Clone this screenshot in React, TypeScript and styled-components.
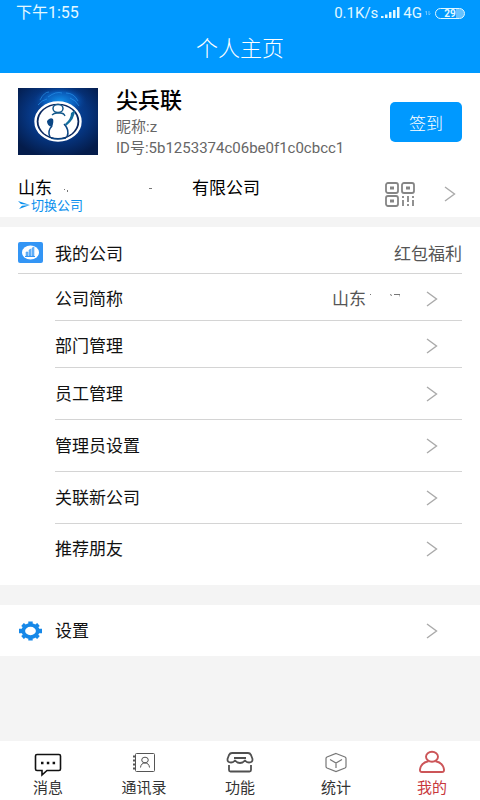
import React from "react";
import styled, { createGlobalStyle } from "styled-components";

const GlobalStyle = createGlobalStyle`
  * { box-sizing: border-box; }
  body {
    margin: 0;
    background: #f4f4f4;
    color: #111;
    font-family: Roboto, "Noto Sans CJK SC", sans-serif;
    font-size: 17px;
    font-weight: 400;
  }
  button { font: inherit; color: inherit; border: 0; padding: 0; background: none; cursor: pointer; }
  a { color: inherit; text-decoration: none; }
  svg { display: block; flex: none; }
`;

const Page = styled.div`
  min-height: 100vh;
  display: flex;
  flex-direction: column;
`;

const Header = styled.header`
  background: #0099ff;
  color: #fff;
  height: 73px;
`;

const StatusBar = styled.div`
  display: flex;
  justify-content: space-between;
  align-items: center;
  height: 26px;
  padding: 0 15px 0 16px;
  font-size: 15px;
  line-height: 26px;
  color: #e2f8ff;
`;

const Clock = styled.span`
  font-size: 16px;
`;

const StatusGroup = styled.div`
  display: flex;
  align-items: center;
  gap: 3px;
`;

const Title = styled.h1`
  margin: 0;
  text-align: center;
  font-size: 22px;
  line-height: 46px;
  font-weight: 300;
`;

const Profile = styled.section`
  background: #fff;
  height: 144px;
  padding: 15px 18px 0;
`;

const Person = styled.div`
  display: flex;
  height: 67px;
  gap: 18px;
`;

const PersonText = styled.div`
  flex: 1;
  min-width: 0;
`;

const Name = styled.h2`
  margin: 0 0 3px;
  font-size: 22px;
  line-height: 26px;
  font-weight: 500;
  color: #000;
`;

const Detail = styled.p`
  margin: 0;
  font-size: 15px;
  line-height: 21px;
  color: #666;
  white-space: nowrap;
`;

const SignButton = styled.button`
  && {
    margin-top: 14px;
    width: 72px;
    height: 40px;
    border-radius: 5px;
    background: #0099ff;
    color: #fff;
    font-size: 17px;
    font-weight: 300;
  }
`;

const Company = styled.div`
  display: flex;
  align-items: center;
  height: 62px;
  padding-top: 16px;
`;

const CompanyText = styled.div`
  flex: 1;
`;

const CompanyName = styled.div`
  display: flex;
  align-items: center;
  line-height: 22px;
  color: #000;
`;

const Erased = styled.span<{ $width: number }>`
  width: ${(p) => p.$width}px;
  height: 22px;
`;

const SwitchButton = styled.button`
  && {
    display: flex;
    align-items: center;
    gap: 1px;
    color: #0a90ee;
    font-size: 13px;
    line-height: 13px;
  }
`;

const CompanyActions = styled.div`
  display: flex;
  align-items: center;
  gap: 29px;
  padding-right: 6px;
`;

const Section = styled.section<{ $gap: number; $end?: number }>`
  background: #fff;
  margin-top: ${(p) => p.$gap}px;
  padding: 0 18px ${(p) => p.$end ?? 0}px;
`;

const SectionHead = styled.div`
  display: flex;
  align-items: center;
  height: 47px;
  padding-top: 4px;
  border-bottom: 1px solid #d4d4d4;
`;

const HeadIcon = styled.span`
  width: 37px;
`;

const HeadTitle = styled.h2`
  margin: 0;
  flex: 1;
  font-size: 17px;
  font-weight: 400;
`;

const Welfare = styled.a`
  color: #555;
`;

const Row = styled.button<{ $height: number; $top?: number; $last?: boolean; $indent?: boolean }>`
  && {
    display: flex;
    align-items: center;
    width: ${(p) => (p.$indent ? "calc(100% - 37px)" : "100%")};
    height: ${(p) => p.$height}px;
    margin-left: ${(p) => (p.$indent ? 37 : 0)}px;
    padding-top: ${(p) => p.$top ?? 0}px;
    padding-right: 24px;
    border-bottom: ${(p) => (p.$last ? "0" : "1px solid #d4d4d4")};
    text-align: left;
    line-height: 24px;
  }
`;

const RowLabel = styled.span`
  flex: 1;
`;

const RowValue = styled.span`
  display: flex;
  align-items: center;
  margin-right: 26px;
  color: #555;
`;

const TabBar = styled.nav`
  display: grid;
  grid-template-columns: repeat(5, 1fr);
  height: 59px;
  margin-top: auto;
  background: #fff;
`;

const Tab = styled.a<{ $active?: boolean }>`
  display: flex;
  flex-direction: column;
  align-items: center;
  padding-top: 8px;
  font-size: 15px;
  line-height: 22px;
  color: ${(p) => (p.$active ? "#c8373c" : "#333")};
`;

const Chevron = () => (
  <svg width="12" height="16" viewBox="0 0 12 16" fill="none" stroke="#aaa" strokeWidth="1.4" aria-hidden="true">
    <path d="M1 1l9.500 7L1 15" />
  </svg>
);

const Signal = () => (
  <svg width="19" height="12" viewBox="0 0 19 12" fill="#e2f8ff" aria-hidden="true">
    <rect x="0" y="9" width="2.500" height="2" />
    <rect x="4" y="7.500" width="2.500" height="3.500" />
    <rect x="8" y="5" width="2.500" height="6" />
    <rect x="12" y="3" width="2.500" height="8" />
    <rect x="16" y="0" width="2.500" height="11" />
  </svg>
);

const DataArrows = () => (
  <svg width="6" height="6" viewBox="0 0 6 6" fill="none" stroke="#6cc4ff" aria-hidden="true">
    <path d="M1.500 5V1L0 2.500M4 1v4l1.500-1.500" />
  </svg>
);

const BatteryBox = styled.span`
  display: block;
  width: 30px;
  height: 11px;
  margin-left: 1px;
  border: 1px solid #e2f8ff;
  border-radius: 6px;
  background: linear-gradient(90deg, #0099ff 70%, #66c2ff 70%);
  font-size: 10px;
  line-height: 10px;
  font-weight: 700;
  text-align: center;
`;

const Avatar = () => (
  <svg width="80" height="67" viewBox="0 0 80 67" role="img" aria-label="尖兵联">
    <defs>
      <radialGradient id="night" cx="50%" cy="40%" r="65%">
        <stop offset="0" stopColor="#0a55b5" />
        <stop offset="0.550" stopColor="#063784" />
        <stop offset="1" stopColor="#041c4b" />
      </radialGradient>
      <radialGradient id="glow" cx="50%" cy="50%" r="50%">
        <stop offset="0" stopColor="#1290ea" />
        <stop offset="0.600" stopColor="#0a62c4" stopOpacity="0.800" />
        <stop offset="1" stopColor="#063784" stopOpacity="0" />
      </radialGradient>
    </defs>
    <rect width="80" height="67" fill="url(#night)" />
    <ellipse cx="42" cy="13" rx="27" ry="15" fill="url(#glow)" />
    <path d="M22 12q4-8 9-8M30 9q8-6 14-4M48 5q8 0 12 8M52 10q6 2 9 8M20 17q4-5 9-6" stroke="#2b9af0" fill="none" opacity="0.600" />
    <ellipse cx="40" cy="33.500" rx="22.500" ry="19" fill="#08265e" stroke="#fff" strokeWidth="2.400" />
    <ellipse cx="40" cy="33.500" rx="19.500" ry="16.500" fill="#fff" />
    <ellipse cx="40" cy="20.500" rx="5" ry="4" fill="#fff" stroke="#14598b" strokeWidth="1.500" />
    <path d="M34 27q2-2 5-2h3q4 0 5 3" stroke="#14598b" strokeWidth="1.300" fill="none" />
    <path d="M29 33q3-4 6-2 1 3-1 8-5-1-5-6z" fill="#0b4684" />
    <path d="M57 22q0 9-9 16l-1-2q6-5 6-11z" fill="#126e9e" />
    <path d="M34 38q-5 5-2 11M46 36q6 6 3 13M33 50q6 2 15 0" stroke="#0b4684" strokeWidth="1.500" fill="none" />
  </svg>
);

const PlaneIcon = () => (
  <svg width="12" height="8" viewBox="0 0 12 8" fill="#0a90ee" aria-hidden="true">
    <path d="M0 0l12 4L1 8l3-3.300L12 4 3 3z" />
  </svg>
);

const QrIcon = () => (
  <svg width="30" height="25" viewBox="0 0 30 25" fill="none" stroke="#858585" strokeWidth="1.800" aria-hidden="true">
    <rect x="1" y="1" width="12" height="10" rx="2" />
    <rect x="17" y="1" width="12" height="10" rx="2" />
    <rect x="1" y="14" width="12" height="10" rx="2" />
    <path d="M5 6h4M21 6h4M5 19h4" strokeWidth="3" />
    <path d="M18 14v2M18 18v6M23 14v6M23 22v2M28 14v2M28 18v6" />
  </svg>
);

const CompanyIcon = () => (
  <svg width="25" height="21" viewBox="0 0 25 21" aria-hidden="true">
    <rect width="25" height="21" rx="2" fill="#3395f5" />
    <ellipse cx="12.500" cy="10.500" rx="8.500" ry="7" fill="#fff" />
    <path d="M8 14v-4h2v4zM11 14V8l2-1v7zM14 14V6l2-1v9z" fill="#72b7f8" stroke="#3395f5" strokeWidth="0.500" />
    <path d="M7 14.500h10" stroke="#3395f5" />
  </svg>
);

const GearIcon = () => (
  <svg width="24" height="20" viewBox="0 0 24 20" aria-hidden="true">
    <g fill="none" stroke="#1688e8">
      <ellipse cx="12.500" cy="10" rx="7.200" ry="6" strokeWidth="3.600" />
      <path d="M12.500 0.500v3M12.500 16.500v3M1 10h3M21 10h3" strokeWidth="4.400" />
      <path d="M4.500 3.400l2 1.700M18.500 14.900l2 1.700M20.500 3.400l-2 1.700M6.500 14.900l-2 1.700" strokeWidth="4" />
    </g>
  </svg>
);

const MessageIcon = () => (
  <svg width="28" height="28" viewBox="0 0 28 28" fill="none" stroke="#111" strokeWidth="1.600" aria-hidden="true">
    <path d="M3 5.500h22q1.500 0 1.500 1.500v13q0 1.500-1.500 1.500H13l-5 4.500v-4.500H3q-1.500 0-1.500-1.500V7Q1.500 5.500 3 5.500z" />
    <path d="M7 14h2.500M12.800 14h2.500M18.600 14h2.500" strokeWidth="2.500" />
  </svg>
);

const ContactsIcon = () => (
  <svg width="24" height="28" viewBox="0 0 24 28" fill="none" stroke="#555" aria-hidden="true">
    <rect x="3.500" y="4.500" width="19" height="18" rx="1" />
    <path d="M1 7.500h3M1 11.500h3M1 15.500h3M1 19.500h3" strokeWidth="1.800" />
    <ellipse cx="13" cy="11" rx="3.300" ry="2.800" />
    <path d="M8.500 18.500q.5-4.500 4.500-4.500t4.500 4.500" />
  </svg>
);

const ShopIcon = () => (
  <svg width="28" height="28" viewBox="0 0 28 28" fill="none" stroke="#505050" strokeWidth="1.800" strokeLinejoin="round" aria-hidden="true">
    <path d="M6 4h16q2 0 3 2l1.500 4q.3 3.500-3.500 3.500-2.500 0-4-2-2 2.500-5 2.500t-5-2.500q-1.500 2-4 2-3.800 0-3.500-3.500L3 6q1-2 3-2z" />
    <path d="M8 9h12M3 16v5q0 1.500 1.500 1.500h19q1.500 0 1.500-1.500v-5" />
  </svg>
);

const CubeIcon = () => (
  <svg width="24" height="28" viewBox="0 0 24 28" fill="none" stroke="#777" strokeWidth="1.200" aria-hidden="true">
    <path d="M12 4.500l9 3.500q1 .5 1 1.500v8q0 1-1 1.500l-9 3.500L3 19q-1-.5-1-1.500v-8Q2 8.500 3 8z" />
    <path d="M6 10.500l6 3.500 6-3.500M12 14v5" />
  </svg>
);

const MeIcon = () => (
  <svg width="28" height="28" viewBox="0 0 28 28" fill="none" stroke="#cc5558" strokeWidth="1.900" aria-hidden="true">
    <ellipse cx="14" cy="7.800" rx="6" ry="5" />
    <path d="M10.500 12.300q-7.500 1.500-8.500 8-.3 2.700 2 2.700h20q2.300 0 2-2.700-1-6.500-8.500-8" />
  </svg>
);

const rows = [
  { label: "公司简称", height: 47, top: 3, company: true },
  { label: "部门管理", height: 47, top: 3 },
  { label: "员工管理", height: 52 },
  { label: "管理员设置", height: 52 },
  { label: "关联新公司", height: 52 },
  { label: "推荐朋友", height: 50 },
];

const tabs = [
  { label: "消息", Icon: MessageIcon },
  { label: "通讯录", Icon: ContactsIcon },
  { label: "功能", Icon: ShopIcon },
  { label: "统计", Icon: CubeIcon },
  { label: "我的", Icon: MeIcon },
];

export default function App() {
  return (
    <>
      <GlobalStyle />
      <Page>
        <Header>
          <StatusBar>
            <Clock>下午1:55</Clock>
            <StatusGroup>
              <span>0.1K/s</span>
              <Signal />
              <span>4G</span>
              <DataArrows />
              <BatteryBox>29</BatteryBox>
            </StatusGroup>
          </StatusBar>
          <Title>个人主页</Title>
        </Header>

        <Profile>
          <Person>
            <Avatar />
            <PersonText>
              <Name>尖兵联</Name>
              <Detail>昵称:z</Detail>
              <Detail>ID号:5b1253374c06be0f1c0cbcc1</Detail>
            </PersonText>
            <SignButton type="button">签到</SignButton>
          </Person>
          <Company>
            <CompanyText>
              <CompanyName>
                <span>山东</span>
                <Erased $width={140}>
                  <svg width="140" height="22" viewBox="0 0 140 22" fill="#777" aria-hidden="true">
                    <path d="M12 12h1v1h-1zM15 13h1v2h-1zM97 11h3v1h-3z" />
                  </svg>
                </Erased>
                <span>有限公司</span>
              </CompanyName>
              <SwitchButton type="button">
                <PlaneIcon />
                切换公司
              </SwitchButton>
            </CompanyText>
            <CompanyActions>
              <QrIcon />
              <Chevron />
            </CompanyActions>
          </Company>
        </Profile>

        <Section $gap={10} $end={11}>
          <SectionHead>
            <HeadIcon>
              <CompanyIcon />
            </HeadIcon>
            <HeadTitle>我的公司</HeadTitle>
            <Welfare href="#welfare">红包福利</Welfare>
          </SectionHead>
          {rows.map((row, i) => (
            <Row
              key={row.label}
              type="button"
              $indent
              $height={row.height}
              $top={row.top}
              $last={i === rows.length - 1}
            >
              <RowLabel>{row.label}</RowLabel>
              {row.company && (
                <RowValue>
                  <span>山东</span>
                  <svg width="34" height="16" viewBox="0 0 34 16" fill="none" stroke="#777" aria-hidden="true">
                    <path d="M4 3.500h1M24 3.500l2 1M28 3.500h6v2" />
                  </svg>
                </RowValue>
              )}
              <Chevron />
            </Row>
          ))}
        </Section>

        <Section $gap={20}>
          <Row type="button" $height={51} $last>
            <HeadIcon>
              <GearIcon />
            </HeadIcon>
            <RowLabel>设置</RowLabel>
            <Chevron />
          </Row>
        </Section>

        <TabBar>
          {tabs.map(({ label, Icon }) => (
            <Tab key={label} href={`#${label}`} $active={label === "我的"}>
              <Icon />
              {label}
            </Tab>
          ))}
        </TabBar>
      </Page>
    </>
  );
}
